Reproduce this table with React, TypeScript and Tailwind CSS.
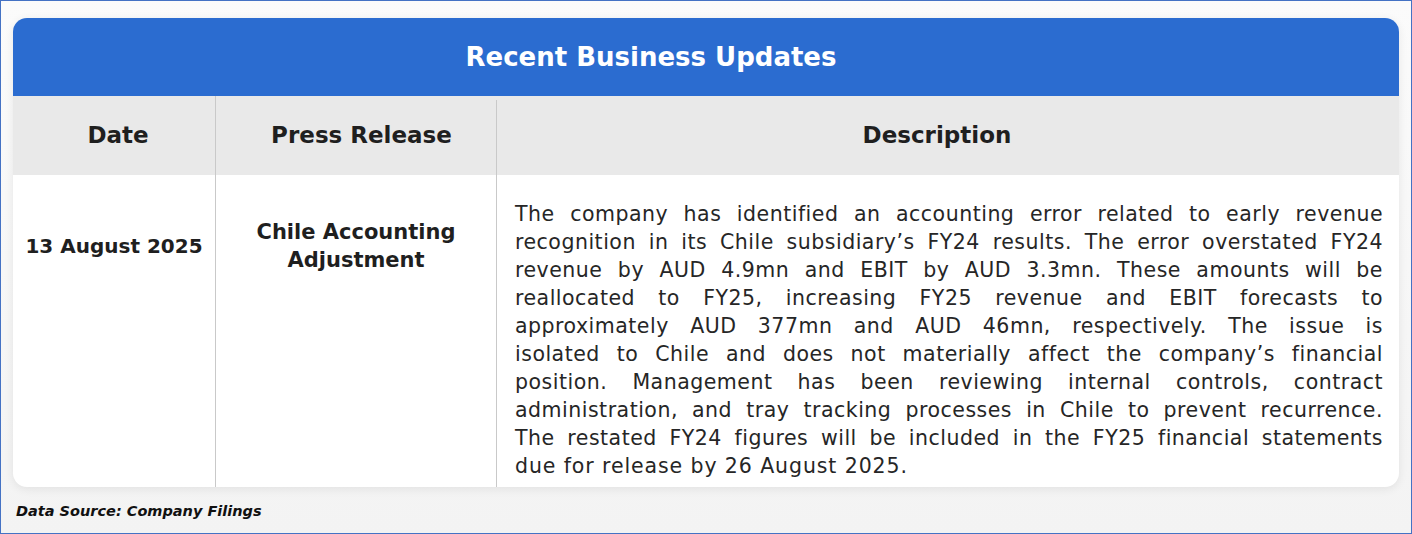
const LINES = [
  'The company has identified an accounting error related to early revenue',
  'recognition in its Chile subsidiary\u2019s FY24 results. The error overstated FY24',
  'revenue by AUD 4.9mn and EBIT by AUD 3.3mn. These amounts will be',
  'reallocated to FY25, increasing FY25 revenue and EBIT forecasts to',
  'approximately AUD 377mn and AUD 46mn, respectively. The issue is',
  'isolated to Chile and does not materially affect the company\u2019s financial',
  'position. Management has been reviewing internal controls, contract',
  'administration, and tray tracking processes in Chile to prevent recurrence.',
  'The restated FY24 figures will be included in the FY25 financial statements',
  'due for release by 26 August 2025.',
];

export default function App() {
  return (
    <div className="w-[1412px] h-[534px] border border-[#4472c4] bg-gradient-to-b from-[#fbfbfb] to-[#f3f3f3] font-['DejaVu_Sans',sans-serif] text-[#1f1f1f] flex flex-col">
      <div className="mx-[12px] mt-[17px] rounded-[14px] bg-white shadow-[0_2px_10px_rgba(0,0,0,0.08)] overflow-hidden">
        <div className="h-[78px] bg-[#2b6cd0] flex items-center justify-center pr-[110px] text-white text-[26px] font-bold">
          Recent Business Updates
        </div>
        <div className="grid grid-cols-[203px_281px_1fr] bg-[#e9e9e9] h-[79px] text-[23px] font-bold">
          <div className="flex items-center justify-center pl-[8px] border-r border-[#c9c9c9]">Date</div>
          <div className="relative flex items-center justify-center pl-[10px] after:absolute after:right-0 after:top-[4px] after:bottom-0 after:w-px after:bg-[#c9c9c9]">
            Press Release
          </div>
          <div className="flex items-center justify-center pr-[22px]">Description</div>
        </div>
        <div className="grid grid-cols-[203px_281px_1fr] h-[312px]">
          <div className="border-r border-[#c9c9c9] text-[20px] font-bold leading-[28px] pt-[57px] text-center">
            13 August 2025
          </div>
          <div className="flex flex-col items-center border-r border-[#c9c9c9] text-[21px] font-bold leading-[28px] pt-[43px] text-center">
            <span>Chile Accounting</span>
            <span>Adjustment</span>
          </div>
          <div className="pl-[18px] pr-[16px] pt-[25px] text-[20.5px] leading-[28px] tracking-[0.5px] text-[#262626]">
            {LINES.map((l, i) =>
              i < LINES.length - 1 ? (
                <div key={i} className="text-justify [text-align-last:justify] whitespace-nowrap">
                  {l}
                </div>
              ) : (
                <div key={i} className="tracking-[0.9px]">
                  {l}
                </div>
              )
            )}
          </div>
        </div>
      </div>
      <div className="pl-[15px] pt-[14px] text-[14.5px] font-bold italic text-[#111]">
        Data Source: Company Filings
      </div>
    </div>
  );
}
